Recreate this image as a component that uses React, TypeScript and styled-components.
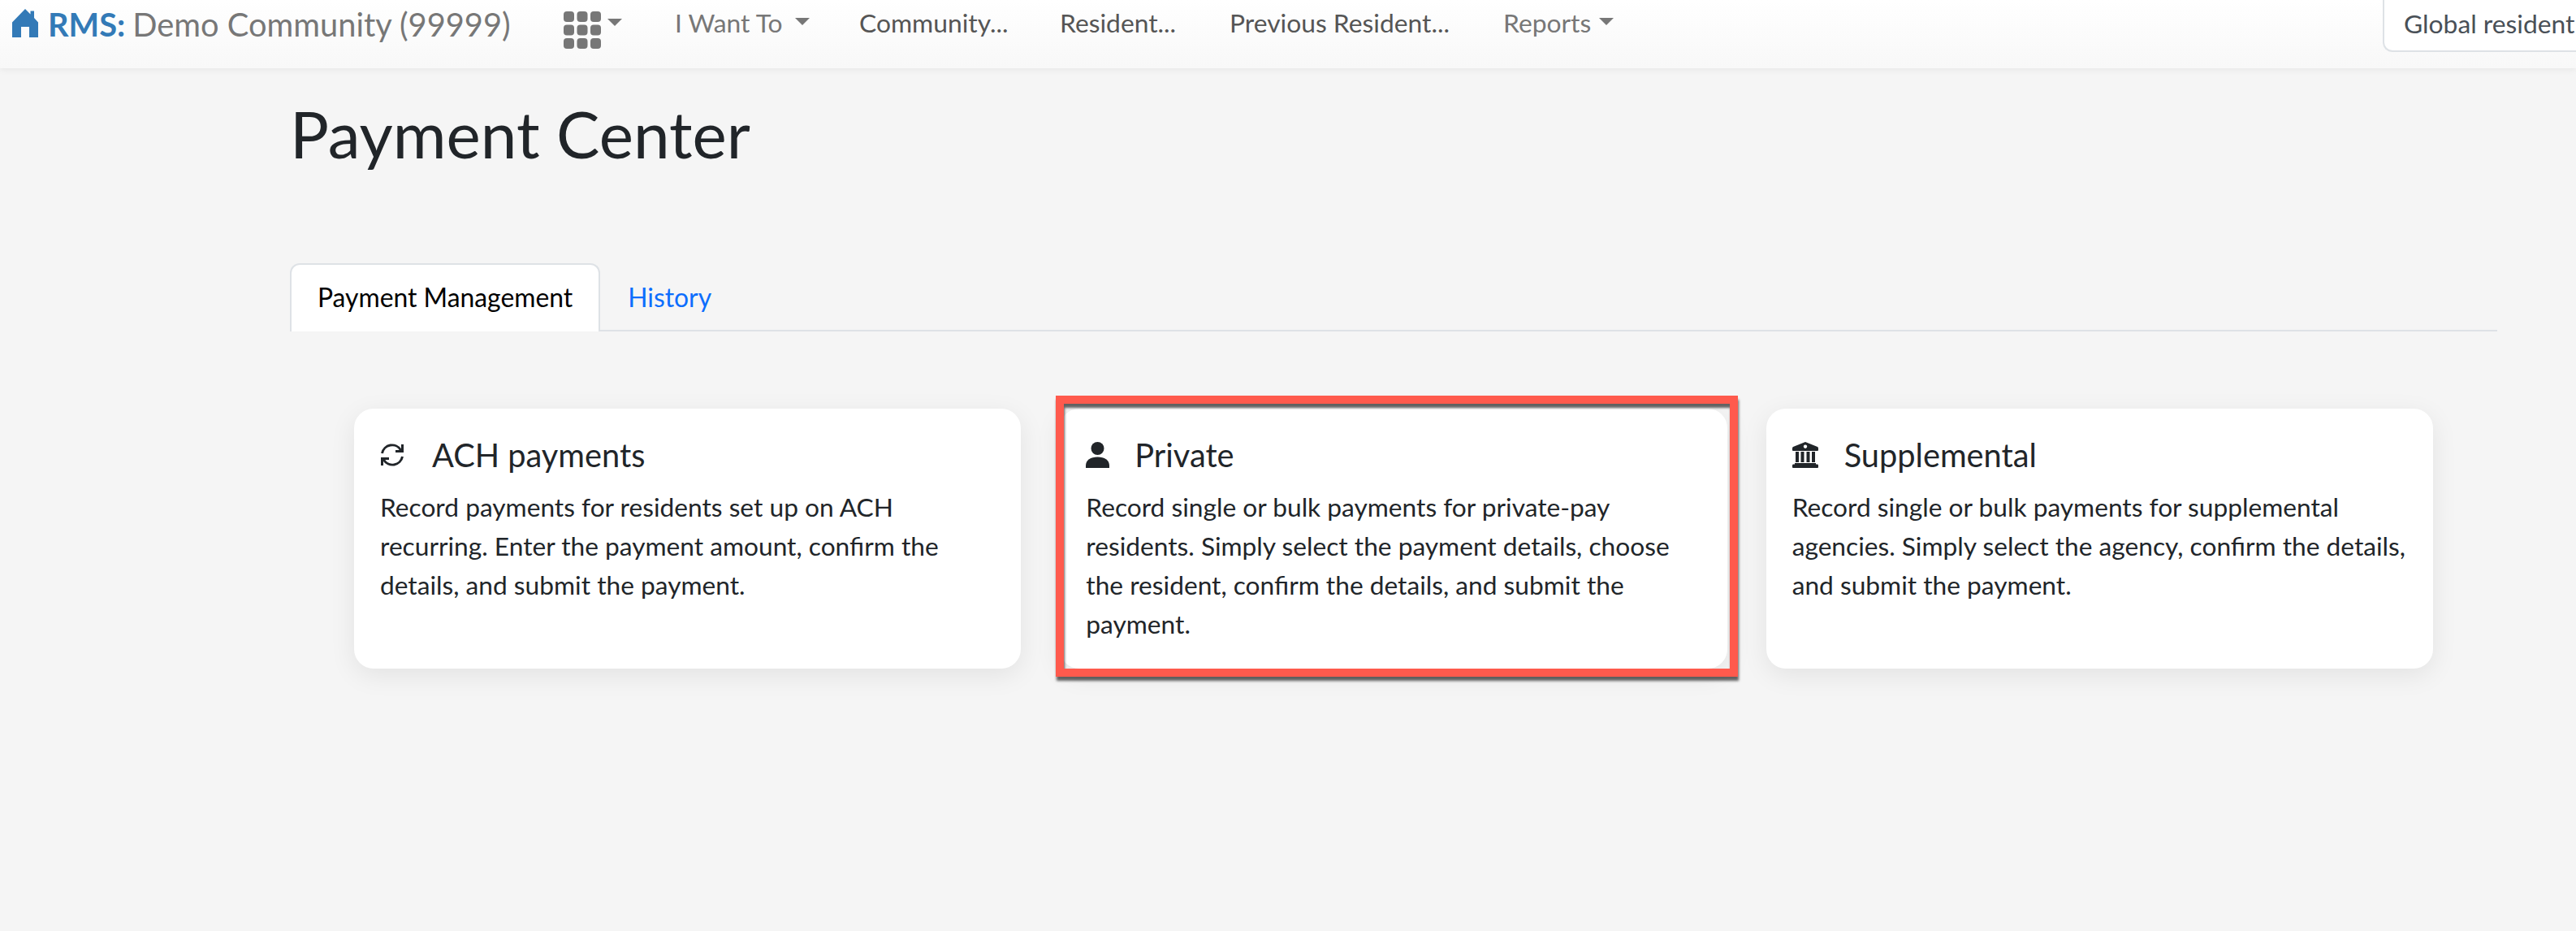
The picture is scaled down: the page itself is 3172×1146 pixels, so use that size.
import React from "react";
import styled, { createGlobalStyle } from "styled-components";

const GlobalStyle = createGlobalStyle`
  html, body {
    margin: 0;
    padding: 0;
    background: #f5f5f5;
    font-family: "Lato", "Liberation Sans", sans-serif;
    color: #212529;
    overflow: hidden;
  }
  * { box-sizing: border-box; }
`;

const Page = styled.div`
  width: 3172px;
  height: 1146px;
  overflow: hidden;
`;

const Navbar = styled.nav`
  height: 84px;
  display: flex;
  align-items: flex-start;
  background: linear-gradient(to bottom, #ffffff 0%, #f8f8f8 100%);
  box-shadow: 0 2px 8px rgba(0, 0, 0, 0.06);
  position: relative;
`;

const Brand = styled.div`
  display: flex;
  align-items: center;
  height: 58px;
  margin-left: 15px;
  font-size: 39.8px;
  color: #777;
  white-space: nowrap;
  width: 679px;
`;

const BrandName = styled.span`
  color: #337ab7;
  font-weight: 700;
  margin: 0 9px 0 12px;
`;

const NavItem = styled.div<{ $dark?: boolean; $width: number; $indent?: number }>`
  display: flex;
  align-items: center;
  height: 56px;
  width: ${(p) => p.$width}px;
  padding-left: ${(p) => p.$indent ?? 0}px;
  font-size: 31.8px;
  color: ${(p) => (p.$dark ? "#555" : "#777")};
  white-space: nowrap;
`;

const Caret = styled.span<{ $gap?: number }>`
  display: inline-block;
  margin-left: ${(p) => p.$gap ?? 10}px;
  margin-bottom: 4px;
  border-top: 9px solid #777;
  border-left: 9px solid transparent;
  border-right: 9px solid transparent;
`;

const GridToggle = styled.div`
  display: flex;
  align-items: flex-start;
  width: 135px;
  height: 70px;
  padding-top: 14px;
`;

const GridCaret = styled(Caret)`
  margin: 9px 0 0 8px;
`;

const SearchBox = styled.div`
  margin-left: auto;
  width: 238px;
  height: 66px;
  margin-top: -2px;
  padding: 0 0 5px 24px;
  display: flex;
  align-items: center;
  background: #fff;
  border: 2px solid #dee2e6;
  border-right: none;
  border-radius: 0 0 0 12px;
  font-size: 31.8px;
  color: #495057;
  white-space: nowrap;
  overflow: hidden;
`;

const Main = styled.main`
  padding: 0 97px 0 357px;
`;

const Title = styled.h1`
  margin: 32px 0 0;
  font-size: 80px;
  font-weight: 400;
  line-height: 96px;
  color: #212529;
`;

const Tabs = styled.div`
  margin-top: 112px;
  display: flex;
  height: 84px;
  border-bottom: 2px solid #dee2e6;
`;

const Tab = styled.div<{ $active?: boolean }>`
  height: 84px;
  padding: 0 32px 3px;
  display: flex;
  align-items: center;
  font-size: 31.85px;
  border: 2px solid ${(p) => (p.$active ? "#dee2e6" : "transparent")};
  border-bottom: none;
  border-radius: 12px 12px 0 0;
  background: ${(p) => (p.$active ? "#fff" : "transparent")};
  color: ${(p) => (p.$active ? "#000" : "#0d6efd")};
`;

const CardRow = styled.div`
  margin: 95px 79px 0;
  display: grid;
  grid-template-columns: repeat(3, 1fr);
  gap: 48px;
`;

const Card = styled.section<{ $marked?: boolean }>`
  position: relative;
  height: 320px;
  padding: 33px 32px 32px;
  background: #fff;
  border-radius: 24px;
  box-shadow: 0 8px 32px rgba(0, 0, 0, 0.08);

  ${(p) =>
    p.$marked &&
    `
    &::after {
      content: "";
      position: absolute;
      top: -16px;
      left: -5px;
      right: -13px;
      bottom: -10px;
      border: 10px solid #ff5a4d;
      box-shadow: 1px 5px 3px rgba(0, 0, 0, 0.6), inset 1px 5px 3px rgba(0, 0, 0, 0.6);
    }
  `}
`;

const CardHead = styled.div`
  display: flex;
  align-items: center;
  height: 48px;
  margin-bottom: 16px;
  font-size: 39.75px;
  line-height: 48px;
  color: #212529;
`;

const CardIcon = styled.span<{ $width: number }>`
  display: flex;
  width: ${(p) => p.$width}px;
  flex: none;
`;

const CardText = styled.p`
  margin: 0;
  font-size: 31.7px;
  line-height: 48px;
  color: #212529;
`;

const HomeIcon = () => (
  <svg width="32" height="36" viewBox="0 0 32 36" fill="#337ab7">
    <path d="M16 0 L22.5 6.5 V2.5 H27 V11 L32 16.5 V35 H21 V22 H11 V35 H0 V16.5 Z" />
  </svg>
);

const GridIcon = () => (
  <svg width="46" height="46" viewBox="0 0 46 46" fill="#777">
    {[0, 16.5, 33].map((y) =>
      [0, 16.5, 33].map((x) => (
        <rect key={`${x}-${y}`} x={x} y={y} width="13" height="13" rx="4" />
      ))
    )}
  </svg>
);

const SyncIcon = () => (
  <svg width="30" height="28" viewBox="0 0 30 28" fill="none" stroke="#212529" strokeWidth="3">
    <path d="M2.5 12 A12.5 12.5 0 0 1 25.5 8" />
    <path d="M27.5 1 V9.5 H19" />
    <path d="M27.5 16 A12.5 12.5 0 0 1 4.5 20" />
    <path d="M2.5 27 V18.5 H11" />
  </svg>
);

const PersonIcon = () => (
  <svg width="29" height="32" viewBox="0 0 29 32" fill="#212529">
    <circle cx="14.5" cy="8" r="8" />
    <path d="M0 32 V29 C0 22.5 6 18.5 14.5 18.5 C23 18.5 29 22.5 29 29 V32 Z" />
  </svg>
);

const BankIcon = () => (
  <svg width="32" height="32" viewBox="0 0 32 32" fill="#212529">
    <path
      fillRule="evenodd"
      d="M16 0 L31 6 Q32 6.5 32 8 V10 Q32 11 31 11 H1 Q0 11 0 10 V8 Q0 6.5 1 6 Z M16 3.5 a2.2 2.2 0 1 0 0.01 0 Z"
    />
    <path d="M4 12 H8 V25 H4 Z M10.5 12 H14.5 V25 H10.5 Z M17.5 12 H21.5 V25 H17.5 Z M24 12 H28 V25 H24 Z" />
    <path d="M3 26 H29 V27.5 H31 Q32 27.5 32 29 V31 Q32 32 31 32 H1 Q0 32 0 31 V29 Q0 27.5 1 27.5 H3 Z" />
  </svg>
);

const cards = [
  {
    title: "ACH payments",
    icon: <SyncIcon />,
    iconWidth: 64,
    text: "Record payments for residents set up on ACH recurring. Enter the payment amount, confirm the details, and submit the payment.",
  },
  {
    title: "Private",
    icon: <PersonIcon />,
    iconWidth: 60,
    marked: true,
    text: "Record single or bulk payments for private-pay residents. Simply select the payment details, choose the resident, confirm the details, and submit the payment.",
  },
  {
    title: "Supplemental",
    icon: <BankIcon />,
    iconWidth: 64,
    text: "Record single or bulk payments for supplemental agencies. Simply select the agency, confirm the details, and submit the payment.",
  },
];

export default function App() {
  return (
    <Page>
      <GlobalStyle />
      <Navbar>
        <Brand>
          <HomeIcon />
          <BrandName>RMS:</BrandName>
          Demo Community (99999)
        </Brand>
        <GridToggle>
          <GridIcon />
          <GridCaret />
        </GridToggle>
        <NavItem $width={229} $indent={2}>
          I Want To
          <Caret $gap={15} />
        </NavItem>
        <NavItem $dark $width={247}>Community...</NavItem>
        <NavItem $dark $width={209}>Resident...</NavItem>
        <NavItem $dark $width={337}>Previous Resident...</NavItem>
        <NavItem $width={160}>
          Reports
          <Caret $gap={10} />
        </NavItem>
        <SearchBox>Global resident</SearchBox>
      </Navbar>
      <Main>
        <Title>Payment Center</Title>
        <Tabs>
          <Tab $active>Payment Management</Tab>
          <Tab>History</Tab>
        </Tabs>
        <CardRow>
          {cards.map((card) => (
            <Card key={card.title} $marked={card.marked}>
              <CardHead>
                <CardIcon $width={card.iconWidth}>{card.icon}</CardIcon>
                {card.title}
              </CardHead>
              <CardText>{card.text}</CardText>
            </Card>
          ))}
        </CardRow>
      </Main>
    </Page>
  );
}
